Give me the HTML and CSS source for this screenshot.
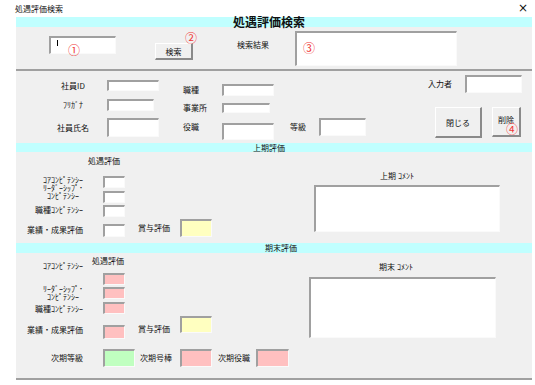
FILE: index.html
```html
<!DOCTYPE html>
<html lang="ja">
<head>
  <meta charset="UTF-8">
  <title>処遇評価検索</title>
  <link rel="stylesheet" href="styles.css">
</head>
<body>
  <div class="caption">
    <span class="caption-title">処遇評価検索</span>
    <span class="caption-close">×</span>
  </div>

  <div class="form">
    <div class="band band-main">処遇評価検索</div>

    <div class="search">
      <div class="box search-key"><span class="cursor"></span><span class="mark mark-1">①</span></div>
      <div class="btn search-btn">検索<span class="mark mark-2">②</span></div>
      <div class="label search-label">検索結果</div>
      <div class="box search-result"><span class="mark mark-3">③</span></div>
    </div>

    <div class="info">
      <div class="info-col info-1">
        <div class="field f-id"><span class="label">社員ID</span><div class="box"></div></div>
        <div class="field f-kana"><span class="label">ﾌﾘｶﾞﾅ</span><div class="box"></div></div>
        <div class="field f-name"><span class="label">社員氏名</span><div class="box"></div></div>
      </div>
      <div class="info-col info-2">
        <div class="field f-job"><span class="label">職種</span><div class="box"></div></div>
        <div class="field f-office"><span class="label">事業所</span><div class="box"></div></div>
        <div class="field f-post"><span class="label">役職</span><div class="box"></div></div>
      </div>
      <div class="info-col info-3">
        <div class="field f-grade"><span class="label">等級</span><div class="box"></div></div>
      </div>
      <div class="info-col info-4">
        <div class="field f-inputter"><span class="label">入力者</span><div class="box"></div></div>
        <div class="buttons">
          <div class="btn btn-close">閉じる</div>
          <div class="btn btn-delete">削除<span class="mark mark-4">④</span></div>
        </div>
      </div>
    </div>

    <div class="band band-first">上期評価</div>

    <div class="eval eval-first">
      <div class="eval-labels">
        <span class="label l1">ｺｱｺﾝﾋﾟﾃﾝｼｰ</span>
        <span class="label label-two l2">ﾘｰﾀﾞｰｼｯﾌﾟ･<br>ｺﾝﾋﾟﾃﾝｼｰ</span>
        <span class="label l3">職種ｺﾝﾋﾟﾃﾝｼｰ</span>
        <span class="label l4">業績・成果評価</span>
      </div>
      <div class="eval-boxes">
        <span class="label eval-heading">処遇評価</span>
        <div class="box eval-box b1"></div>
        <div class="box eval-box b2"></div>
        <div class="box eval-box b3"></div>
        <div class="box eval-box b4"></div>
      </div>
      <div class="bonus">
        <span class="label">賞与評価</span>
        <div class="box yellow"></div>
      </div>
      <div class="comment">
        <span class="label comment-label">上期 ｺﾒﾝﾄ</span>
        <div class="box comment-box"></div>
      </div>
    </div>

    <div class="band band-final">期末評価</div>

    <div class="eval eval-final">
      <div class="eval-top">
        <div class="eval-labels">
          <span class="label l1">ｺｱｺﾝﾋﾟﾃﾝｼｰ</span>
          <span class="label label-two l2">ﾘｰﾀﾞｰｼｯﾌﾟ･<br>ｺﾝﾋﾟﾃﾝｼｰ</span>
          <span class="label l3">職種ｺﾝﾋﾟﾃﾝｼｰ</span>
          <span class="label l4">業績・成果評価</span>
        </div>
        <div class="eval-boxes">
          <span class="label eval-heading">処遇評価</span>
          <div class="box eval-box pink b1"></div>
          <div class="box eval-box pink b2"></div>
          <div class="box eval-box pink b3"></div>
          <div class="box eval-box pink b4"></div>
        </div>
        <div class="bonus">
          <span class="label">賞与評価</span>
          <div class="box yellow"></div>
        </div>
        <div class="comment">
          <span class="label comment-label">期末 ｺﾒﾝﾄ</span>
          <div class="box comment-box"></div>
        </div>
      </div>
      <div class="next-row">
        <span class="label next-label">次期等級</span>
        <div class="box green next-grade"></div>
        <span class="label next-label-2">次期号棒</span>
        <div class="box pink next-step"></div>
        <span class="label next-label-3">次期役職</span>
        <div class="box pink next-post"></div>
      </div>
    </div>
  </div>
</body>
</html>
```

FILE: styles.css
```css
* {
  box-sizing: border-box;
}

body {
  margin: 0;
  width: 535px;
  height: 385px;
  overflow: hidden;
  background: #fff;
  font-family: "Noto Sans CJK JP", sans-serif;
  font-size: 8px;
  color: #111;
}

.caption {
  display: flex;
  justify-content: space-between;
  height: 17px;
  padding: 4px 7px 0 15px;
  line-height: 9px;
}

.caption-close {
  font-family: "DejaVu Sans", sans-serif;
  font-size: 12px;
  line-height: 9px;
}

.form {
  margin-left: 16px;
  width: 516px;
  height: 363px;
  background: #f0f0f0;
  border-bottom: 2px solid #a0a0a0;
}

.label {
  line-height: 8px;
  white-space: nowrap;
}

.box {
  background: #fff;
  border-style: solid;
  border-width: 2px 1px 1px 2px;
  border-color: #a0a0a0 #fafafa #fafafa #a0a0a0;
}

.pink { background: #ffc0c0; }
.yellow { background: #ffffc0; }
.green { background: #c0ffc0; }

.btn {
  position: relative;
  display: flex;
  align-items: center;
  justify-content: center;
  background: #f0f0f0;
  border-style: solid;
  border-width: 1px 2px 2px 1px;
  border-color: #fff #8a8a8a #8a8a8a #fff;
}

.mark {
  position: absolute;
  color: #f03838;
  font-size: 12px;
  line-height: 12px;
}

/* cyan bands */
.band {
  height: 9px;
  line-height: 9px;
  background: #c0ffff;
  text-align: center;
}

.band-main {
  height: 10px;
  line-height: 10px;
  font-size: 12px;
  font-weight: bold;
  padding-right: 10px;
}

.band-first { padding-right: 10px; }

.band-final {
  height: 10px;
  line-height: 10px;
  padding-left: 14px;
}

/* search row */
.search {
  display: flex;
  align-items: flex-start;
  height: 44px;
  border-bottom: 2px solid #a0a0a0;
}

.search-key {
  position: relative;
  margin: 9px 0 0 33px;
  width: 67px;
  height: 18px;
}

.cursor {
  position: absolute;
  left: 6px;
  top: 2px;
  width: 1px;
  height: 6px;
  background: #000;
}

.mark-1 { left: 17px; top: 6px; }

.search-btn {
  margin: 16px 0 0 39px;
  width: 38px;
  height: 17px;
}

.mark-2 { left: 29px; top: -12px; }

.search-label {
  margin: 14px 0 0 44px;
  width: 32px;
}

.search-result {
  position: relative;
  margin: 4px 0 0 26px;
  width: 162px;
  height: 35px;
}

.mark-3 { left: 6px; top: 9px; }

/* employee info */
.info {
  display: flex;
  height: 72px;
}

.info-col {
  display: flex;
  flex-direction: column;
}

.field {
  display: flex;
  align-items: center;
}

.info-1 { margin-left: 40px; }

.info-1 .label {
  width: 34px;
  margin-right: 17px;
  text-align: center;
}

.f-id { margin-top: 9px; }
.f-id .box { width: 52px; height: 11px; }
.f-kana { margin-top: 8px; }
.f-kana .box { width: 47px; height: 12px; }
.f-name { margin-top: 7px; }
.f-name .box { width: 52px; height: 19px; }

.info-2 { margin-left: 24px; }
.info-2 .label { width: 39px; }

.f-job { margin-top: 13px; }
.f-job .box { width: 52px; height: 12px; }
.f-office { margin-top: 7px; }
.f-office .box { width: 48px; height: 10px; }
.f-post { margin-top: 10px; align-items: flex-start; }
.f-post .box { width: 52px; height: 17px; }

.info-3 { margin: 47px 0 0 16px; }
.f-grade .label { width: 29px; }
.f-grade .box { width: 47px; height: 18px; }

.info-4 { margin-left: 62px; }

.f-inputter { margin-top: 4px; }
.f-inputter .label { width: 37px; }
.f-inputter .box { width: 57px; height: 18px; }

.buttons {
  display: flex;
  gap: 10px;
  margin: 14px 0 0 7px;
}

.btn-close { width: 47px; height: 31px; }

.btn-delete {
  align-items: flex-start;
  padding-top: 6px;
  width: 29px;
  height: 30px;
}

.mark-4 { left: 13px; top: 15px; }

/* evaluation blocks */
.eval { display: flex; }
.eval-first { height: 91px; }

.eval-final {
  flex-direction: column;
  height: 125px;
}

.eval-top { display: flex; }

.eval-labels {
  display: flex;
  flex-direction: column;
  align-items: flex-end;
  width: 67px;
}

.label-two {
  text-align: center;
}

.eval-boxes {
  display: flex;
  flex-direction: column;
  align-items: flex-start;
}

.eval-box {
  width: 22px;
  height: 12px;
}

.eval-first .l1 { margin-top: 24px; }
.eval-first .l3 { margin-top: 6px; }
.eval-first .l4 { margin-top: 12px; }
.eval-first .eval-boxes { margin-left: 5px; width: 37px; }
.eval-first .eval-heading { margin-top: 5px; }
.eval-first .eval-box { margin-left: 15px; }
.eval-first .b1 { margin-top: 11px; }
.eval-first .b2 { margin-top: 3px; }
.eval-first .b3 { margin-top: 2px; }
.eval-first .b4 { margin-top: 7px; height: 13px; }

.eval-final .l1 { margin-top: 9px; }
.eval-final .l2 { margin-top: 15px; }
.eval-final .l3 { margin-top: 4px; }
.eval-final .l4 { margin-top: 13px; }
.eval-final .eval-boxes { margin-left: 9px; width: 33px; }
.eval-final .eval-heading { margin-top: 4px; }
.eval-final .eval-box { margin-left: 11px; }
.eval-final .b1 { margin-top: 8px; }
.eval-final .b2 { margin-top: 2px; }
.eval-final .b3 { margin-top: 3px; }
.eval-final .b4 { margin-top: 11px; height: 14px; }

.bonus {
  display: flex;
  align-items: center;
  margin: 67px 0 0 13px;
  height: 18px;
}

.bonus .label { width: 42px; }
.bonus .box { width: 32px; height: 18px; }

.eval-final .bonus {
  align-items: flex-end;
  margin-top: 63px;
  height: 17px;
}

.eval-final .bonus .box { height: 17px; }

.comment {
  display: flex;
  flex-direction: column;
  margin-left: 102px;
  width: 186px;
}

.comment-label {
  margin-top: 20px;
  padding-right: 20px;
  text-align: center;
}

.comment-box {
  margin-top: 5px;
  height: 47px;
}

.eval-final .comment { margin-left: 97px; width: 187px; }
.eval-final .comment-label { margin-top: 10px; padding-right: 13px; }
.eval-final .comment-box { margin-top: 6px; height: 61px; }

.next-row {
  display: flex;
  align-items: center;
  margin-top: 10px;
}

.next-label { width: 67px; text-align: right; }
.next-grade { margin-left: 20px; width: 32px; height: 18px; }
.next-label-2 { margin-left: 5px; width: 40px; }
.next-step { width: 32px; height: 18px; }
.next-label-3 { margin-left: 6px; width: 38px; }
.next-post { width: 33px; height: 18px; }
```
